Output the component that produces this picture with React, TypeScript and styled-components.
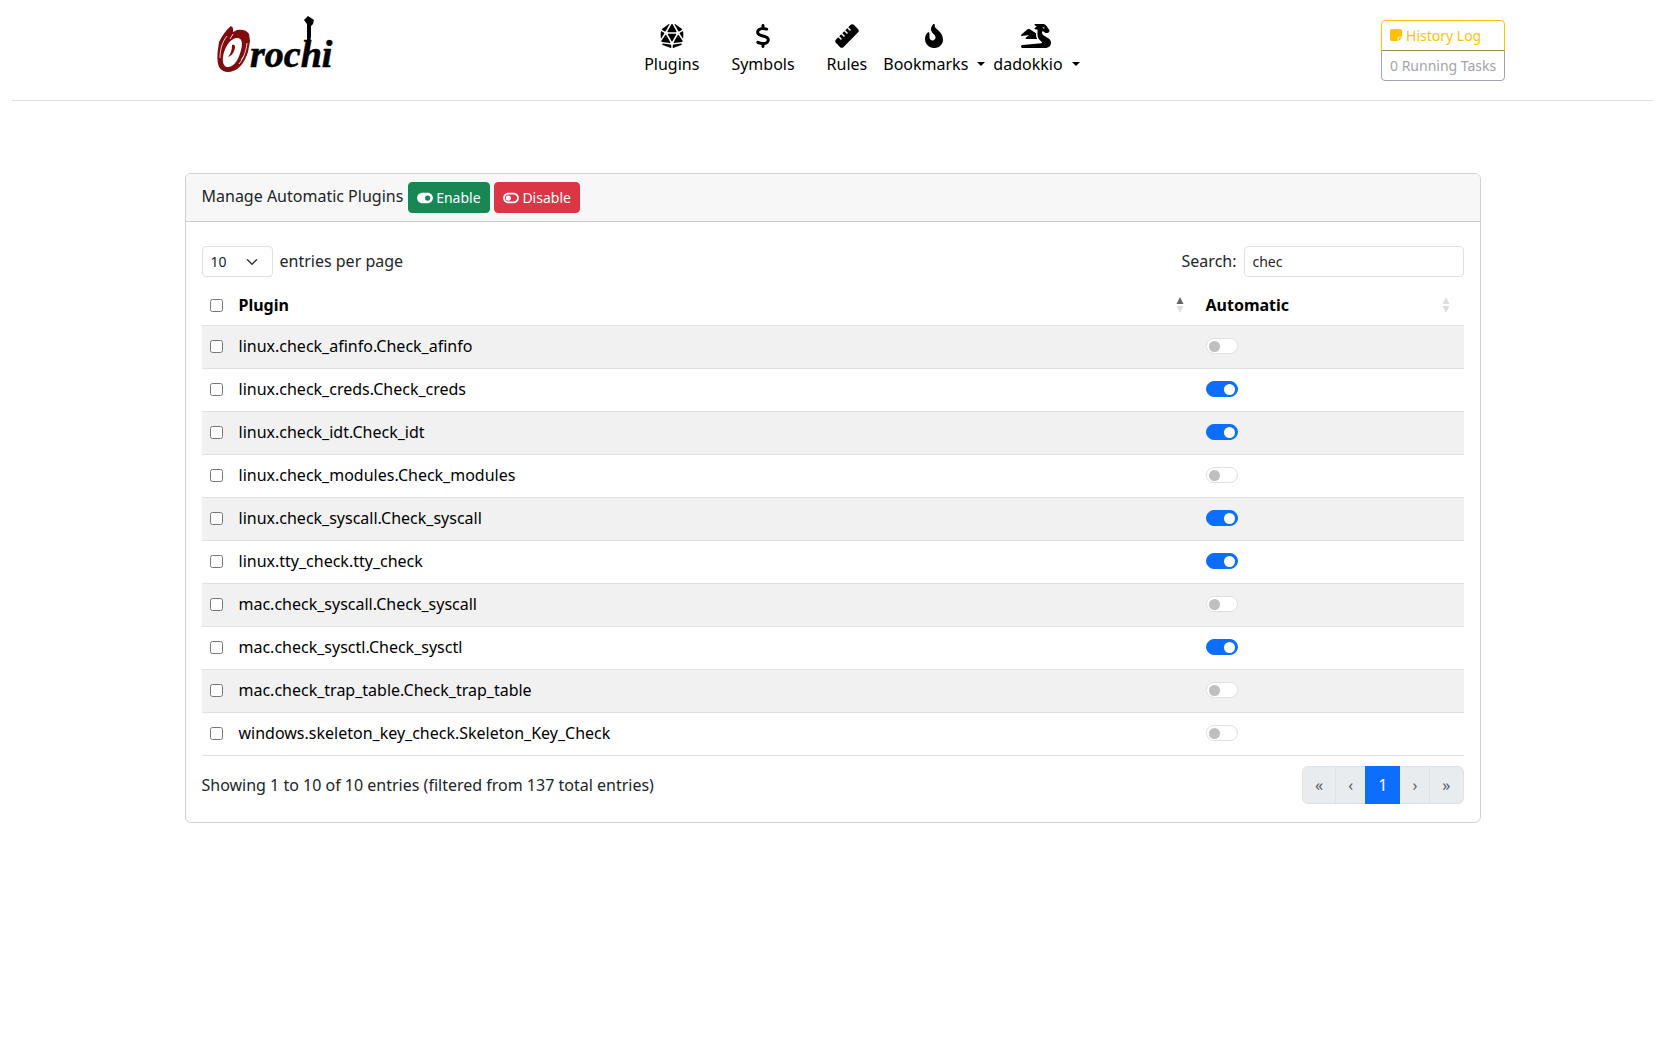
import React, { useState } from "react";
import styled, { createGlobalStyle } from "styled-components";
import {
  FaDiceD20,
  FaDollarSign,
  FaDragon,
  FaFireFlameCurved,
  FaNoteSticky,
  FaRuler,
  FaToggleOff,
  FaToggleOn,
} from "react-icons/fa6";

const GlobalStyle = createGlobalStyle`
  *, *::before, *::after { box-sizing: border-box; }
  body {
    margin: 0;
    background: #fff;
    color: #212529;
    font: 400 16px/24px "Noto Sans", "Liberation Sans", sans-serif;
  }
  button, input, select { margin: 0; font-family: inherit; }
`;

const Header = styled.header`
  display: flex;
  flex-wrap: wrap;
  align-items: center;
  justify-content: space-around;
  margin: 0 12px;
  padding: 10px 0;
  border-bottom: 1px solid #dee2e6;
`;

const LogoLink = styled.a`
  display: block;
  width: 173px;
  height: 80px;

  svg { display: block; overflow: visible; }
`;

const Nav = styled.nav`
  display: flex;
  padding-right: 6px;
`;

const NavLink = styled.a`
  display: flex;
  flex-direction: column;
  align-items: center;
  gap: 4px;
  padding: 0 16px;
  color: #000;
  text-decoration: none;

  svg { display: block; font-size: 24px; }
`;

const NavMenu = styled.button`
  display: flex;
  flex-direction: column;
  align-items: center;
  gap: 4px;
  padding: 0;
  border: 0;
  background: none;
  color: #000;
  font-size: 16px;
  line-height: 24px;
  cursor: pointer;

  & + & { margin-left: 8px; }
  svg { display: block; font-size: 24px; }
`;

const DragonIcon = styled(FaDragon)`
  width: 30px;
`;

const NoteIcon = styled(FaNoteSticky)`
  width: 12px;
`;

const OnIcon = styled(FaToggleOn)`
  width: 16px;
`;

const OffIcon = styled(FaToggleOff)`
  width: 16px;
`;

const MenuLabel = styled.span`
  display: flex;
  align-items: center;
  gap: 9px;
`;

const Caret = styled.span`
  border: 4px solid transparent;
  border-top-color: currentColor;
  border-bottom: 0;
`;

const TaskButtons = styled.div`
  display: flex;
  flex-direction: column;
`;

const TaskButton = styled.button<{ $tone: string }>`
  display: flex;
  align-items: center;
  gap: 4px;
  padding: 4px 8px;
  border: 1px solid ${(p) => p.$tone};
  border-radius: 4px 4px 0 0;
  background: transparent;
  color: ${(p) => p.$tone};
  font-size: 14px;
  line-height: 21px;

  & + & { margin-top: -1px; border-radius: 0 0 4px 4px; }
  &:disabled { opacity: 0.65; }
`;

const Card = styled.main`
  width: calc(100% - 24px);
  max-width: 1296px;
  margin: 72px auto 24px;
  border: 1px solid rgba(0, 0, 0, 0.18);
  border-radius: 6px;
`;

const CardHeader = styled.div`
  padding: 8px 16px;
  border-bottom: 1px solid rgba(0, 0, 0, 0.18);
  border-radius: 5px 5px 0 0;
  background: #f7f7f7;
`;

const ActionButton = styled.button<{ $tone: string }>`
  padding: 4px 8px;
  border: 1px solid ${(p) => p.$tone};
  border-radius: 4px;
  background: ${(p) => p.$tone};
  color: #fff;
  font-size: 14px;
  line-height: 21px;
  vertical-align: middle;
  cursor: pointer;

  svg { vertical-align: -2px; }
`;

const CardBody = styled.div`
  padding: 24px 16px 18px;
`;

const Toolbar = styled.div`
  display: flex;
  flex-wrap: wrap;
  align-items: center;
  justify-content: space-between;
  gap: 8px;
`;

const Field = styled.div`
  display: flex;
  align-items: baseline;
  gap: 7px;
`;

const SelectWrap = styled.div`
  display: grid;
  align-items: center;
  width: 71px;

  > * { grid-area: 1 / 1; }
  svg { justify-self: end; margin-right: 15px; pointer-events: none; }
`;

const Select = styled.select`
  width: 100%;
  height: 31px;
  padding: 4px 8px;
  border: 1px solid #dee2e6;
  border-radius: 4px;
  background: #fff;
  color: #212529;
  font-size: 14px;
  line-height: 21px;
  appearance: none;
`;

const SearchInput = styled.input`
  width: 220px;
  height: 31px;
  padding: 4px 8px;
  border: 1px solid #dee2e6;
  border-radius: 4px;
  background: #fff;
  color: #212529;
  font-size: 14px;
  line-height: 21px;
`;

const Table = styled.table`
  width: 100%;
  margin: 8px 0 10px;
  border-spacing: 0;
  table-layout: fixed;
  color: #000;
`;

const HeadCell = styled.th<{ $width?: number }>`
  width: ${(p) => (p.$width ? `${p.$width}px` : "auto")};
  height: 41px;
  padding: 0 8px;
  border-bottom: 1px solid #dee2e6;
  font-weight: 700;
  text-align: left;
`;

const SortHeading = styled.div`
  display: flex;
  align-items: center;
  justify-content: space-between;
  padding-right: 6px;
`;

const Row = styled.tr`
  &:nth-child(odd) { background: #f1f1f1; }
`;

const Cell = styled.td`
  height: 43px;
  padding: 0 8px 2px;
  border-bottom: 1px solid #dee2e6;
`;

const Checkbox = styled.input`
  display: block;
  width: 13px;
  height: 13px;
`;

const Switch = styled.input`
  display: flex;
  align-items: center;
  width: 32px;
  height: 16px;
  padding: 0 2px;
  border: 1px solid #dee2e6;
  border-radius: 8px;
  background: #fff;
  appearance: none;

  &::before {
    content: "";
    width: 11px;
    height: 11px;
    border-radius: 50%;
    background: #bfbfbf;
  }
  &:checked {
    justify-content: flex-end;
    border-color: #0d6efd;
    background: #0d6efd;
  }
  &:checked::before { background: #fff; }
`;

const Pagination = styled.div`
  display: flex;
`;

const PageButton = styled.button<{ $active?: boolean }>`
  padding: 6px 12px;
  border: 1px solid ${(p) => (p.$active ? "#0d6efd" : "#dee2e6")};
  background: ${(p) => (p.$active ? "#0d6efd" : "#e9ecef")};
  color: ${(p) => (p.$active ? "#fff" : "rgba(33, 37, 41, 0.75)")};
  font-size: 16px;
  line-height: 24px;
  z-index: ${(p) => (p.$active ? 1 : 0)};

  & + & { margin-left: -1px; }
  &:first-child { border-radius: 6px 0 0 6px; }
  &:last-child { border-radius: 0 6px 6px 0; }
`;

const Logo = () => (
  <svg width="173" height="80" viewBox="0 0 173 80" aria-hidden="true">
    <path
      fill="#800b0e"
      fillRule="evenodd"
      d="M71 16 L73 18 L73 22 L77 20 C82 19 87 20 89 24 L90 31 L88 42 C85 51 80 59 73 61 C68 63 62 62 59 57 C57 52 57 45 58 39 L59 32 C62 26 66 20 71 16Z M76 28 C70 29 64 38 63 47 C62 54 65 58 69 57 C75 56 79 48 81 40 C83 33 82 27 76 28Z"
    />
    <path fill="#800b0e" d="M72 35 C75 34 76 37 74 41 C73 44 71 46 68 47 C71 43 72 40 72 35Z" />
    <path
      fill="none"
      stroke="#fff"
      strokeWidth="0.8"
      d="M60 48 C60 38 63 31 67 26 M87 33 C86 42 83 49 79 54 M73 24 L70 29 M84 46 L81 50"
    />
    <text
      x="90"
      y="57"
      fill="#000"
      stroke="#000"
      strokeWidth="0.6"
      fontFamily="Liberation Serif, serif"
      fontSize="38"
      fontStyle="italic"
      fontWeight="700"
    >
      rochi
    </text>
    <path fill="#000" d="M144 10 L148 6 L154 10 L153 14 L151 16 L151 26 L149 41 L145 40 L147 30 L147 14Z" />
  </svg>
);

const SortArrows = ({ ascending = false }: { ascending?: boolean }) => (
  <svg width="8" height="16" viewBox="0 0 8 16" aria-hidden="true">
    <path d="M4 0 L7.5 7 H0.5Z" fill={ascending ? "#666" : "#dedede"} />
    <path d="M4 16 L7.5 9 H0.5Z" fill="#dedede" />
  </svg>
);

type Plugin = { name: string; automatic: boolean };

const initialPlugins: Plugin[] = [
  { name: "linux.check_afinfo.Check_afinfo", automatic: false },
  { name: "linux.check_creds.Check_creds", automatic: true },
  { name: "linux.check_idt.Check_idt", automatic: true },
  { name: "linux.check_modules.Check_modules", automatic: false },
  { name: "linux.check_syscall.Check_syscall", automatic: true },
  { name: "linux.tty_check.tty_check", automatic: true },
  { name: "mac.check_syscall.Check_syscall", automatic: false },
  { name: "mac.check_sysctl.Check_sysctl", automatic: true },
  { name: "mac.check_trap_table.Check_trap_table", automatic: false },
  { name: "windows.skeleton_key_check.Skeleton_Key_Check", automatic: false },
];

export default function App() {
  const [plugins, setPlugins] = useState(initialPlugins);
  const [selected, setSelected] = useState<string[]>([]);

  const toggleSelected = (name: string) =>
    setSelected((list) => (list.includes(name) ? list.filter((n) => n !== name) : [...list, name]));

  const setAutomatic = (names: string[], automatic: boolean) =>
    setPlugins((list) => list.map((p) => (names.includes(p.name) ? { ...p, automatic } : p)));

  const allSelected = selected.length === plugins.length;

  return (
    <>
      <GlobalStyle />
      <Header>
        <LogoLink href="#" aria-label="Orochi">
          <Logo />
        </LogoLink>
        <Nav>
          <NavLink href="#plugins"><FaDiceD20 />Plugins</NavLink>
          <NavLink href="#symbols"><FaDollarSign />Symbols</NavLink>
          <NavLink href="#rules"><FaRuler />Rules</NavLink>
          <NavMenu type="button">
            <FaFireFlameCurved />
            <MenuLabel>Bookmarks<Caret /></MenuLabel>
          </NavMenu>
          <NavMenu type="button">
            <DragonIcon />
            <MenuLabel>dadokkio<Caret /></MenuLabel>
          </NavMenu>
        </Nav>
        <TaskButtons>
          <TaskButton type="button" $tone="#ffc107"><NoteIcon />History Log</TaskButton>
          <TaskButton type="button" $tone="#6c757d" disabled>0 Running Tasks</TaskButton>
        </TaskButtons>
      </Header>

      <Card>
        <CardHeader>
          Manage Automatic Plugins{" "}
          <ActionButton type="button" $tone="#198754" onClick={() => setAutomatic(selected, true)}>
            <OnIcon /> Enable
          </ActionButton>{" "}
          <ActionButton type="button" $tone="#dc3545" onClick={() => setAutomatic(selected, false)}>
            <OffIcon /> Disable
          </ActionButton>
        </CardHeader>
        <CardBody>
          <Toolbar>
            <Field>
              <SelectWrap>
                <Select id="page-length" defaultValue="10">
                  <option>10</option>
                  <option>25</option>
                  <option>50</option>
                  <option>100</option>
                </Select>
                <svg width="12" height="12" viewBox="0 0 16 16" aria-hidden="true">
                  <path d="m2 5 6 6 6-6" fill="none" stroke="#343a40" strokeWidth="2" strokeLinecap="round" strokeLinejoin="round" />
                </svg>
              </SelectWrap>
              <label htmlFor="page-length">entries per page</label>
            </Field>
            <Field>
              <label htmlFor="search">Search:</label>
              <SearchInput id="search" type="search" defaultValue="chec" />
            </Field>
          </Toolbar>

          <Table>
            <thead>
              <tr>
                <HeadCell $width={29}>
                  <Checkbox
                    type="checkbox"
                    aria-label="Select all plugins"
                    checked={allSelected}
                    onChange={() => setSelected(allSelected ? [] : plugins.map((p) => p.name))}
                  />
                </HeadCell>
                <HeadCell aria-sort="ascending">
                  <SortHeading>Plugin<SortArrows ascending /></SortHeading>
                </HeadCell>
                <HeadCell $width={266}>
                  <SortHeading>Automatic<SortArrows /></SortHeading>
                </HeadCell>
              </tr>
            </thead>
            <tbody>
              {plugins.map((plugin) => (
                <Row key={plugin.name}>
                  <Cell>
                    <Checkbox
                      type="checkbox"
                      aria-label={`Select ${plugin.name}`}
                      checked={selected.includes(plugin.name)}
                      onChange={() => toggleSelected(plugin.name)}
                    />
                  </Cell>
                  <Cell>{plugin.name}</Cell>
                  <Cell>
                    <Switch
                      type="checkbox"
                      role="switch"
                      aria-label={`Run ${plugin.name} automatically`}
                      checked={plugin.automatic}
                      onChange={() => setAutomatic([plugin.name], !plugin.automatic)}
                    />
                  </Cell>
                </Row>
              ))}
            </tbody>
          </Table>

          <Toolbar>
            <div>Showing 1 to 10 of 10 entries (filtered from 137 total entries)</div>
            <Pagination>
              <PageButton type="button" aria-label="First" disabled>«</PageButton>
              <PageButton type="button" aria-label="Previous" disabled>‹</PageButton>
              <PageButton type="button" $active>1</PageButton>
              <PageButton type="button" aria-label="Next" disabled>›</PageButton>
              <PageButton type="button" aria-label="Last" disabled>»</PageButton>
            </Pagination>
          </Toolbar>
        </CardBody>
      </Card>
    </>
  );
}
